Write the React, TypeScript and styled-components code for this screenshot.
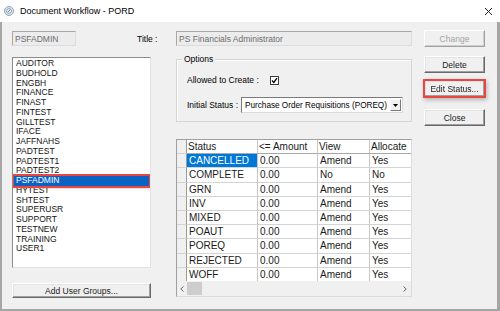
import styled, { createGlobalStyle, css } from "styled-components";

const GlobalStyle = createGlobalStyle`
    * {
        box-sizing: border-box;
    }

    body {
        margin: 0;
        background: #ffffff;
        font-family: "Liberation Sans", Arial, sans-serif;
        color: #000000;
    }
`;

const Window = styled.div`
    width: 500px;
    height: 311px;
    display: flex;
    flex-direction: column;
    overflow: hidden;
`;

const TitleBar = styled.div`
    height: 22px;
    flex: none;
    background: #ffffff;
    display: flex;
    align-items: center;
    gap: 6px;
    padding: 0 7px 0 4px;
    font-size: 9px;
`;

const Caption = styled.span`
    flex: 1;
`;

const Body = styled.div`
    flex: 1;
    display: flex;
    flex-direction: column;
    padding: 8px 0 0 10px;
    background: #f0f0f0;
    border-style: solid;
    border-color: #a6a6a6;
    border-width: 0 3px 2px 2px;
`;

const TopRow = styled.div`
    display: flex;
    align-items: center;
    height: 17px;
`;

const TextField = styled.div<{ $width: number }>`
    width: ${(p) => p.$width}px;
    height: 15px;
    padding: 0 2px;
    display: flex;
    align-items: center;
    background: #ececec;
    border: 1px solid;
    border-color: #a8a8a8 #dcdcdc #dcdcdc #a8a8a8;
    color: #6d6d6d;
    font-size: 8.5px;
    white-space: nowrap;
`;

const FieldLabel = styled.span<{ $width: number; $indent?: number }>`
    width: ${(p) => p.$width}px;
    margin-left: ${(p) => p.$indent ?? 0}px;
    font-size: 8.5px;
    white-space: nowrap;
`;

const Main = styled.div`
    display: flex;
    margin-top: 9px;
`;

const LeftColumn = styled.div`
    width: 139px;
    display: flex;
    flex-direction: column;
`;

const MiddleColumn = styled.div`
    width: 236px;
    margin-left: 25px;
    display: flex;
    flex-direction: column;
`;

const RightColumn = styled.div`
    width: 61px;
    margin-left: 12px;
    display: flex;
    flex-direction: column;
`;

const Button = styled.button<{ $height?: number; $gap?: number; $highlight?: boolean }>`
    width: 100%;
    height: ${(p) => p.$height ?? 17}px;
    margin: ${(p) => p.$gap ?? 0}px 0 0;
    padding: 0;
    flex: none;
    background: #f0f0f0;
    border: 1px solid;
    border-color: #ffffff #696969 #696969 #ffffff;
    box-shadow: inset -1px -1px #a0a0a0, inset 1px 1px #e3e3e3;
    font-family: inherit;
    font-size: 8.5px;
    color: #1a1a1a;

    &:disabled {
        color: #a3a3a3;
        border-color: #ffffff #a0a0a0 #a0a0a0 #ffffff;
        box-shadow: inset -1px -1px #d0d0d0;
    }

    ${(p) =>
        p.$highlight &&
        css`
            outline: 2px solid #e8463f;
            outline-offset: -1px;
            filter: drop-shadow(1px 2px 2px rgba(0, 0, 0, 0.25));
        `}
`;

const ListBox = styled.div`
    height: 211px;
    margin-top: 1px;
    padding: 1px;
    background: #ffffff;
    border: 1px solid;
    border-color: #8c8c8c #e3e3e3 #e3e3e3 #8c8c8c;
    overflow: hidden;
`;

const ListItem = styled.div<{ $selected?: boolean }>`
    height: 9.75px;
    line-height: 9.75px;
    padding-left: 2px;
    font-size: 8.5px;
    color: #141414;
    white-space: nowrap;

    ${(p) =>
        p.$selected &&
        css`
            background: #0a62c4;
            color: #ffffff;
            outline: 2px solid #e8463f;
            outline-offset: 0;
            box-shadow: 1px 2px 3px rgba(0, 0, 0, 0.3);
        `}
`;

const GroupBox = styled.div`
    position: relative;
    height: 63px;
    margin-top: 3px;
    padding: 14px 0 0 10px;
    border: 1px solid #d5d5d5;
    box-shadow: inset 1px 1px #ffffff;
    display: flex;
    flex-direction: column;
`;

const GroupCaption = styled.span`
    position: absolute;
    top: -6px;
    left: 5px;
    padding: 0 2px;
    background: #f0f0f0;
    font-size: 8.5px;
    line-height: 11px;
`;

const OptionRow = styled.div<{ $height: number; $gap?: number }>`
    display: flex;
    align-items: center;
    height: ${(p) => p.$height}px;
    margin-top: ${(p) => p.$gap ?? 0}px;
`;

const CheckBox = styled.span`
    width: 9px;
    height: 9px;
    display: flex;
    align-items: center;
    justify-content: center;
    background: #ffffff;
    border: 1px solid #3c3c3c;
`;

const Combo = styled.div`
    width: 162px;
    height: 16px;
    display: flex;
    align-items: center;
    padding: 1px 1px 1px 3px;
    background: #ffffff;
    border: 1px solid;
    border-color: #7a7a7a #dcdcdc #dcdcdc #7a7a7a;
    font-size: 8.2px;
    white-space: nowrap;
`;

const ComboText = styled.span`
    flex: 1;
`;

const ComboArrow = styled.span`
    width: 11px;
    height: 12px;
    display: flex;
    align-items: center;
    justify-content: center;
    background: #f0f0f0;
    border: 1px solid;
    border-color: #ffffff #7a7a7a #7a7a7a #ffffff;
`;

const GridBox = styled.div`
    height: 158px;
    margin-top: 17px;
    display: flex;
    flex-direction: column;
    background: #ffffff;
    border: 1px solid;
    border-color: #a0a0a0 #dcdcdc #dcdcdc #a0a0a0;
`;

const GridRows = styled.div`
    flex: 1;
    overflow: hidden;
`;

const GridRow = styled.div`
    display: grid;
    grid-template-columns: 10px 71px 60px 52px 60px;
    height: 14.2px;
    overflow: hidden;
`;

const Cell = styled.div<{ $kind?: "rowhead" | "head" | "selected" }>`
    padding-left: 2px;
    border-right: 1px solid #c8c8c8;
    border-bottom: 1px solid #d4d4d4;
    font-size: 10px;
    line-height: 13.2px;
    color: #1a1a1a;
    white-space: nowrap;
    overflow: hidden;

    ${(p) =>
        p.$kind === "rowhead" &&
        css`
            background: #f0f0f0;
            border-right-color: #9a9a9a;
        `}
    ${(p) =>
        p.$kind === "head" &&
        css`
            border-bottom-color: #a8a8a8;
            padding-left: 1px;
        `}
    ${(p) =>
        p.$kind === "selected" &&
        css`
            background: #0078d7;
            color: #ffffff;
        `}
`;

const ScrollBar = styled.div`
    height: 15px;
    flex: none;
    display: flex;
    align-items: stretch;
    background: #f0f0f0;
`;

const ScrollArrow = styled.span<{ $width: number }>`
    width: ${(p) => p.$width}px;
    display: flex;
    align-items: center;
    justify-content: center;
`;

const ScrollThumb = styled.span`
    width: 15px;
    margin: 1px 0;
    background: #cdcdcd;
`;

const ScrollTrack = styled.span`
    flex: 1;
`;

const groups = [
    "AUDITOR",
    "BUDHOLD",
    "ENGBH",
    "FINANCE",
    "FINAST",
    "FINTEST",
    "GILLTEST",
    "IFACE",
    "JAFFNAHS",
    "PADTEST",
    "PADTEST1",
    "PADTEST2",
    "PSFADMIN",
    "HYTEST",
    "SHTEST",
    "SUPERUSR",
    "SUPPORT",
    "TESTNEW",
    "TRAINING",
    "USER1",
];

const statuses = [
    { status: "CANCELLED", amount: "0.00", view: "Amend", allocate: "Yes" },
    { status: "COMPLETE", amount: "0.00", view: "No", allocate: "No" },
    { status: "GRN", amount: "0.00", view: "Amend", allocate: "Yes" },
    { status: "INV", amount: "0.00", view: "Amend", allocate: "Yes" },
    { status: "MIXED", amount: "0.00", view: "Amend", allocate: "Yes" },
    { status: "POAUT", amount: "0.00", view: "Amend", allocate: "Yes" },
    { status: "POREQ", amount: "0.00", view: "Amend", allocate: "Yes" },
    { status: "REJECTED", amount: "0.00", view: "Amend", allocate: "Yes" },
    { status: "WOFF", amount: "0.00", view: "Amend", allocate: "Yes" },
];

const AppIcon = () => (
    <svg width="10" height="10" viewBox="0 0 10 10">
        <circle cx="5" cy="5" r="4.5" fill="#dfe6ee" stroke="#8ea3b9" />
        <circle cx="5" cy="5" r="2.4" fill="#ffffff" stroke="#6f8aa6" strokeWidth="0.8" />
        <path d="M4 5.8 L6.2 3.8" stroke="#4b6a8a" strokeWidth="0.9" />
    </svg>
);

const CloseIcon = () => (
    <svg width="9" height="9" viewBox="0 0 9 9">
        <path d="M1 1 L8 8 M8 1 L1 8" stroke="#1e1e1e" strokeWidth="1" />
    </svg>
);

const Chevron = ({ dir }: { dir: "left" | "right" }) => (
    <svg width="4" height="6" viewBox="0 0 4 6">
        <path
            d={dir === "left" ? "M3.5 0.5 L0.8 3 L3.5 5.5" : "M0.5 0.5 L3.2 3 L0.5 5.5"}
            fill="none"
            stroke="#6a6a6a"
            strokeWidth="1"
        />
    </svg>
);

const App = () => {
    return (
        <Window>
            <GlobalStyle />
            <TitleBar>
                <AppIcon />
                <Caption>Document Workflow - PORD</Caption>
                <CloseIcon />
            </TitleBar>
            <Body>
                <TopRow>
                    <TextField $width={64}>PSFADMIN</TextField>
                    <FieldLabel $width={39} $indent={61}>
                        Title :
                    </FieldLabel>
                    <TextField $width={236}>PS Financials Administrator</TextField>
                    <RightColumn>
                        <Button disabled>Change</Button>
                    </RightColumn>
                </TopRow>
                <Main>
                    <LeftColumn>
                        <ListBox>
                            {groups.map((name) => (
                                <ListItem key={name} $selected={name === "PSFADMIN"}>
                                    {name}
                                </ListItem>
                            ))}
                        </ListBox>
                        <Button $height={15} $gap={15}>
                            Add User Groups...
                        </Button>
                    </LeftColumn>
                    <MiddleColumn>
                        <GroupBox>
                            <GroupCaption>Options</GroupCaption>
                            <OptionRow $height={12}>
                                <FieldLabel $width={83}>Allowed to Create :</FieldLabel>
                                <CheckBox>
                                    <svg width="7" height="7" viewBox="0 0 7 7">
                                        <path d="M1 3.5 L2.8 5.4 L6 1.2" fill="none" stroke="#000" strokeWidth="1.3" />
                                    </svg>
                                </CheckBox>
                            </OptionRow>
                            <OptionRow $height={16} $gap={11}>
                                <FieldLabel $width={54}>Initial Status :</FieldLabel>
                                <Combo>
                                    <ComboText>Purchase Order Requisitions (POREQ)</ComboText>
                                    <ComboArrow>
                                        <svg width="5" height="3" viewBox="0 0 5 3">
                                            <path d="M0 0 H5 L2.5 3 Z" fill="#000" />
                                        </svg>
                                    </ComboArrow>
                                </Combo>
                            </OptionRow>
                        </GroupBox>
                        <GridBox>
                            <GridRows>
                                <GridRow>
                                    <Cell $kind="rowhead" />
                                    <Cell $kind="head">Status</Cell>
                                    <Cell $kind="head">&lt;= Amount</Cell>
                                    <Cell $kind="head">View</Cell>
                                    <Cell $kind="head">Allocate</Cell>
                                </GridRow>
                                {statuses.map((row, index) => (
                                    <GridRow key={row.status}>
                                        <Cell $kind="rowhead" />
                                        <Cell $kind={index === 0 ? "selected" : undefined}>{row.status}</Cell>
                                        <Cell>{row.amount}</Cell>
                                        <Cell>{row.view}</Cell>
                                        <Cell>{row.allocate}</Cell>
                                    </GridRow>
                                ))}
                            </GridRows>
                            <ScrollBar>
                                <ScrollArrow $width={10}>
                                    <Chevron dir="left" />
                                </ScrollArrow>
                                <ScrollThumb />
                                <ScrollTrack />
                                <ScrollArrow $width={12}>
                                    <Chevron dir="right" />
                                </ScrollArrow>
                            </ScrollBar>
                        </GridBox>
                    </MiddleColumn>
                    <RightColumn>
                        <Button>Delete</Button>
                        <Button $gap={7} $highlight>
                            Edit Status...
                        </Button>
                        <Button $gap={12}>Close</Button>
                    </RightColumn>
                </Main>
            </Body>
        </Window>
    );
};

export default App;
